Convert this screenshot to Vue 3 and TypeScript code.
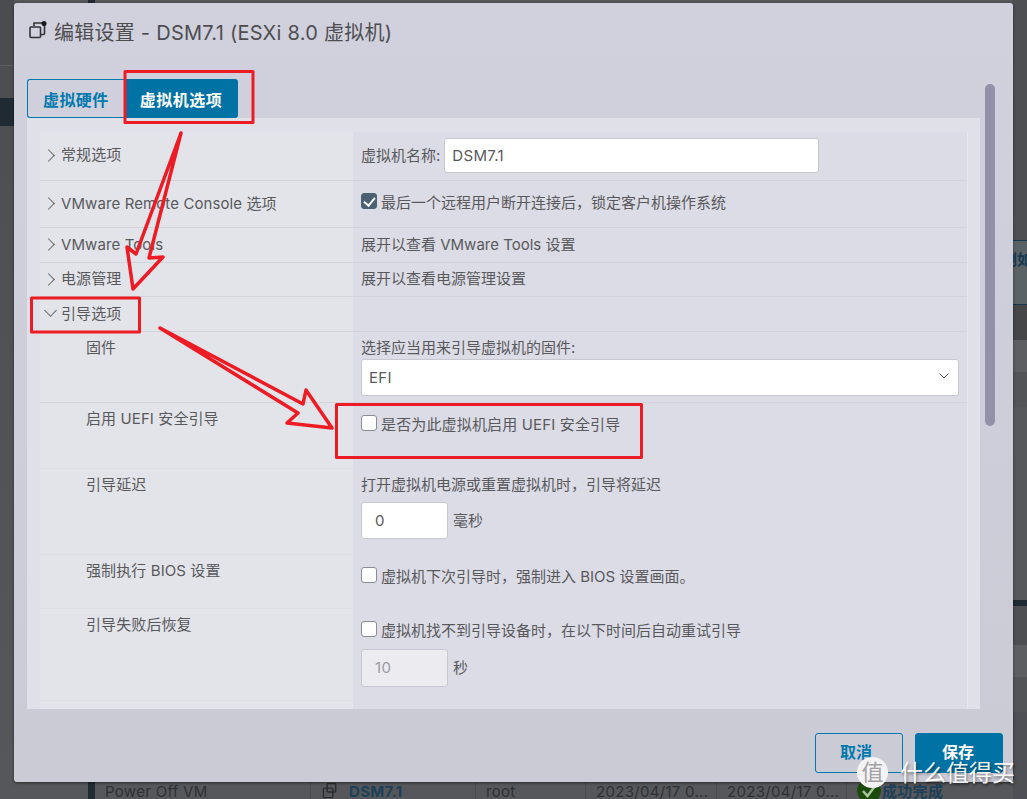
<template>
  <div class="page">
    <div class="side side-left">
      <div class="s-a"></div>
      <div class="s-b"></div>
      <div class="s-c"></div>
      <div class="s-d"></div>
    </div>
    <div class="top-strip"></div>
    <div class="side side-right">
      <div class="r-a"></div>
      <div class="r-btn"><span>例如</span></div>
      <div class="r-b"></div>
      <div class="r-c"></div>
      <div class="r-d"></div>
      <div class="r-e"></div>
      <div class="r-dark"></div>
      <div class="r-f"></div>
      <div class="r-c"></div>
      <div class="r-d"></div>
    </div>
    <div class="task-row">
      <div class="task-mark"></div>
      <div class="task-cell cell-name">Power Off VM</div>
      <div class="task-cell cell-vm">
        <svg class="vm-icon" viewBox="0 0 18 18" width="17" height="17">
          <rect x="5.5" y="1.5" width="9" height="9" rx="1" />
          <rect x="1.5" y="6.5" width="10" height="10" rx="1" />
        </svg>
        <b>DSM7.1</b>
      </div>
      <div class="task-cell cell-user">root</div>
      <div class="task-cell cell-date">2023/04/17 0...</div>
      <div class="task-cell cell-date second">2023/04/17 0...</div>
      <div class="task-cell cell-state">
        <svg viewBox="0 0 24 24" width="24" height="24">
          <circle cx="12" cy="12" r="12" fill="#1c4a0c" />
          <path d="M6 12l4.5 5L18 7" fill="none" stroke="#a9c6a0" stroke-width="2.4" />
        </svg>
        <b>成功完成</b>
      </div>
    </div>

    <section class="modal">
      <header class="modal-head">
        <svg class="title-icon" viewBox="0 0 18 18" width="18" height="18">
          <path d="M5 5V2h9.500c.6 0 1 .4 1 1v9.500c0 .6-.4 1-1 1H12" />
          <rect x="1" y="6" width="10.500" height="10.500" rx="1" />
          <circle class="dot" cx="15" cy="2.500" r="2.500" />
        </svg>
        <h1>编辑设置 - DSM7.1 (ESXi 8.0 虚拟机)</h1>
      </header>

      <nav class="tabs">
        <button class="tab">虚拟硬件</button>
        <button class="tab active">虚拟机选项</button>
      </nav>

      <div class="panel">
        <div class="table">
          <div class="row h1">
            <div class="lab center"><i class="chev"></i>常规选项</div>
            <div class="val center">
              <span>虚拟机名称:</span>
              <div class="input name-input">DSM7.1</div>
            </div>
          </div>
          <div class="row h2">
            <div class="lab center"><i class="chev"></i>VMware Remote Console 选项</div>
            <div class="val check-row">
              <label class="check"><i class="box on"></i>最后一个远程用户断开连接后，锁定客户机操作系统</label>
            </div>
          </div>
          <div class="row h3">
            <div class="lab center"><i class="chev"></i>VMware Tools</div>
            <div class="val center">展开以查看 VMware Tools 设置</div>
          </div>
          <div class="row h4">
            <div class="lab center"><i class="chev"></i>电源管理</div>
            <div class="val center">展开以查看电源管理设置</div>
          </div>
          <div class="row h5">
            <div class="lab center"><i class="chev open"></i>引导选项</div>
            <div class="val"></div>
          </div>
          <div class="row h6">
            <div class="lab sub">固件</div>
            <div class="val stack">
              <span>选择应当用来引导虚拟机的固件:</span>
              <div class="input select">
                EFI
                <svg viewBox="0 0 10 6" width="10" height="6"><path d="M.5.500 5 5 9.500.500" /></svg>
              </div>
            </div>
          </div>
          <div class="row h7">
            <div class="lab sub">启用 UEFI 安全引导</div>
            <div class="val check-row">
              <label class="check uefi"><i class="box"></i>是否为此虚拟机启用 UEFI 安全引导</label>
            </div>
          </div>
          <div class="row h8">
            <div class="lab sub">引导延迟</div>
            <div class="val stack">
              <span>打开虚拟机电源或重置虚拟机时，引导将延迟</span>
              <div class="num-line delay">
                <div class="input num">0</div>
                <span>毫秒</span>
              </div>
            </div>
          </div>
          <div class="row h9">
            <div class="lab sub">强制执行 BIOS 设置</div>
            <div class="val check-row">
              <label class="check"><i class="box"></i>虚拟机下次引导时，强制进入 BIOS 设置画面。</label>
            </div>
          </div>
          <div class="row h10">
            <div class="lab sub">引导失败后恢复</div>
            <div class="val check-row">
              <label class="check"><i class="box"></i>虚拟机找不到引导设备时，在以下时间后自动重试引导</label>
              <div class="num-line retry">
                <div class="input num off">10</div>
                <span>秒</span>
              </div>
            </div>
          </div>
          <div class="row h11">
            <div class="lab"></div>
            <div class="val"></div>
          </div>
        </div>
      </div>

      <footer class="modal-foot">
        <button class="btn">取消</button>
        <button class="btn primary">保存</button>
      </footer>

      <div class="thumb"></div>
    </section>

    <svg class="marks" viewBox="0 0 1027 799" width="1027" height="799">
      <rect x="125" y="71.500" width="128" height="51" />
      <rect x="31.500" y="298" width="108" height="34" />
      <rect x="336.500" y="404.500" width="305" height="53" />
      <path d="M181 133 136 254 127 247 133 289 163 257 149 258Z" />
      <path d="M160 328 303 404 306 390 332 428 287 423 298 413Z" />
    </svg>

    <div class="watermark">
      <span class="seal">值</span>
      <span class="brand">什么值得买</span>
    </div>
  </div>
</template>

<script setup lang="ts">
// static dialog, nothing to wire up
</script>

<style>
html,
body {
  margin: 0;
  background: #4f5055;
}
</style>

<style scoped>
.page {
  position: relative;
  width: 1027px;
  height: 799px;
  overflow: hidden;
  display: grid;
  grid-template-columns: 14px 1fr 14px;
  grid-template-rows: 782px 17px;
  background: #4f5055;
  font-family: Inter, "Noto Sans CJK SC", sans-serif;
  font-size: 15px;
  line-height: 20px;
  color: #59595c;
}

/* page behind the dialog */
.side-left {
  grid-row: 1 / 3;
  grid-column: 1;
  display: flex;
  flex-direction: column;
}
.s-a { height: 65px; background: #4b4c50; border-bottom: 1px solid #5f6064; }
.s-b { height: 32px; background: #4d4e52; }
.s-c { height: 28px; background: #1f2a33; }
.s-d { flex: 1; background: linear-gradient(#4e4f53, #56575a); }

.top-strip {
  grid-column: 2;
  grid-row: 1;
  height: 3px;
  background:
    linear-gradient(90deg, transparent 74px, #1f2a33 74px, #1f2a33 81px, transparent 81px),
    #56575a;
}

.side-right {
  grid-row: 1 / 3;
  grid-column: 3;
  display: flex;
  flex-direction: column;
}
.r-a { height: 240px; background: #4e4f53; }
.r-btn {
  height: 65px;
  box-sizing: border-box;
  background: #5a6265;
  border-top: 1px solid #17394f;
  border-bottom: 1px solid #17394f;
  color: #163a52;
  font-weight: 700;
  line-height: 38px;
  overflow: hidden;
  white-space: nowrap;
}
.r-btn span { display: block; margin-left: -11px; }
.r-b { height: 35px; background: #464649; }
.r-c { height: 32px; background: #5d5e61; }
.r-d { height: 35px; background: #535458; }
.r-e { height: 193px; background: #57585b; }
.r-dark { height: 6px; background: #1d2a33; }
.r-f { height: 39px; background: #4e4f53; }

/* table row peeking out below */
.task-row {
  grid-column: 2;
  grid-row: 2;
  display: flex;
  height: 17px;
  padding-left: 74px;
  background: #56575a;
  color: #2f3034;
  font-size: 15px;
  line-height: 19px;
  letter-spacing: .3px;
  white-space: nowrap;
  overflow: hidden;
}
.task-mark { width: 7px; background: #1f2a33; }
.task-cell {
  box-sizing: border-box;
  padding-left: 10px;
  border-left: 1px solid #4a4b4e;
  display: flex;
  gap: 10px;
}
.cell-name { width: 215px; border-left: 0; }
.cell-vm { width: 165px; padding-left: 11px; }
.cell-vm b, .cell-state b { color: #1d4058; font-weight: 700; }
.cell-user { width: 110px; }
.cell-date { width: 131px; }
.cell-date.second { width: 130px; }
.cell-state { flex: 1; gap: 1px; }
.cell-state svg { flex: none; margin-top: -3px; }
.vm-icon { fill: none; stroke: #2c2d30; stroke-width: 1.500; }

/* dialog */
.modal {
  position: absolute;
  left: 14px;
  top: 3px;
  width: 999px;
  height: 779px;
  display: flex;
  flex-direction: column;
  border-radius: 3px;
  background: linear-gradient(#d1d1de, #cbcbd6);
  box-shadow: 0 1px 3px rgba(0, 0, 0, .5);
}
.modal-head {
  height: 76px;
  box-sizing: border-box;
  padding: 16px 0 0 15px;
  display: flex;
  align-items: flex-start;
  gap: 8px;
}
.title-icon { margin-top: 2px; fill: none; stroke: #333336; stroke-width: 1.600; }
.title-icon .dot { fill: #1a1a1c; stroke: none; }
h1 {
  margin: 1px 0 0 -1px;
  font-size: 20px;
  line-height: 26px;
  font-weight: 400;
  letter-spacing: .25px;
  color: #4d4d50;
}
.tabs {
  height: 39px;
  display: flex;
  padding-left: 13px;
}
.tab {
  width: 104px;
  padding: 0 0 0 15px;
  text-align: left;
  border: 1px solid #0079ad;
  border-right: 0;
  border-radius: 3px 0 0 3px;
  background: transparent;
  color: #0079ad;
  font: 700 16px Inter, "Noto Sans CJK SC", sans-serif;
  letter-spacing: .4px;
}
.tab.active {
  width: 114px;
  margin-left: -7px;
  text-align: center;
  padding: 0;
  border: 0;
  border-radius: 3px;
  background: #0072a3;
  color: #fff;
  letter-spacing: .5px;
}
.panel {
  width: 953px;
  height: 591px;
  margin-left: 13px;
  box-sizing: border-box;
  padding: 14px 13px 0;
  background: #e0e0e9;
  overflow: hidden;
}
.table {
  width: 927px;
  border-right: 1px solid #e7e7ef;
}
.row {
  display: grid;
  grid-template-columns: 313px 614px;
  box-sizing: border-box;
  border-bottom: 1px solid #d2d3db;
}
.h1 { height: 49px; }
.h2 { height: 47px; }
.h3 { height: 35px; }
.h4 { height: 34px; }
.h5 { height: 35px; }
.h6 { height: 71px; }
.h7 { height: 66px; }
.h8 { height: 86px; }
.h9 { height: 54px; }
.h10 { height: 92px; }
.h11 { height: 20px; border-bottom: 0; }
.h7, .h8, .h9, .h10 { border-bottom-color: #dcdde5; }

.lab { background: #e3e4ea; }
.val { background: #dcdce6; padding-left: 8px; }
.center { display: flex; align-items: center; }
.lab.center { padding-left: 21px; position: relative; letter-spacing: .1px; }
.h1 .lab.center, .h4 .lab.center, .h4 .val.center { padding-bottom: 2px; }
.lab.sub { padding: 6px 0 0 46px; letter-spacing: .1px; }

.chev {
  position: absolute;
  left: 4px;
  top: 50%;
  width: 9px;
  height: 9px;
  margin-top: -5px;
  box-sizing: border-box;
  border-top: 1.300px solid #666;
  border-right: 1.300px solid #666;
  transform: rotate(45deg);
}
.chev.open {
  left: 6px;
  margin-top: -8px;
  transform: rotate(135deg);
}

.input {
  box-sizing: border-box;
  background: #fff;
  border: 1px solid #c8c8d0;
  border-radius: 3px;
  padding-left: 7px;
  letter-spacing: .3px;
}
.name-input {
  width: 375px;
  height: 35px;
  line-height: 33px;
  margin-left: 4px;
  margin-top: -1px;
}
.stack { padding-top: 6px; display: flex; flex-direction: column; align-items: flex-start; }
.select {
  width: 598px;
  height: 37px;
  line-height: 35px;
  margin-top: 1px;
  display: flex;
  justify-content: space-between;
  align-items: center;
  padding-right: 9px;
}
.select svg { fill: none; stroke: #555; margin-top: -3px; }

.check-row { padding-top: 12px; }
.check { display: flex; gap: 4px; }
.check.uefi { letter-spacing: .15px; }
.box {
  flex: none;
  width: 16px;
  height: 16px;
  box-sizing: border-box;
  background: #fff;
  border: 1px solid #8b8b93;
  border-radius: 3px;
}
.box.on {
  position: relative;
  background: #4a6173;
  border-color: #4a6173;
}
.box.on::after {
  content: "";
  position: absolute;
  left: 4px;
  top: 1px;
  width: 5px;
  height: 9px;
  border-right: 2px solid #fff;
  border-bottom: 2px solid #fff;
  transform: rotate(40deg);
}
.num-line { display: flex; align-items: center; gap: 5px; }
.num {
  width: 87px;
  height: 37px;
  line-height: 35px;
  padding-left: 13px;
}
.num.off { height: 38px; background: #ebebf0; color: #9c9ca2; }
.delay { margin-top: 7px; }
.retry { margin-top: 8px; }

.modal-foot {
  display: flex;
  justify-content: flex-end;
  gap: 12px;
  padding: 24px 10px 0 0;
}
.btn {
  width: 88px;
  height: 40px;
  padding: 0 6px 4px 0;
  border: 1px solid #0079ad;
  border-radius: 3px;
  background: transparent;
  color: #0079ad;
  font: 700 16px Inter, "Noto Sans CJK SC", sans-serif;
}
.btn.primary {
  padding-right: 2px;
  background: #0072a3;
  border-color: #0072a3;
  color: #fff;
}
.thumb {
  position: absolute;
  left: 971px;
  top: 81px;
  width: 10px;
  height: 342px;
  border-radius: 5px;
  background: #9291a9;
}

/* red annotations drawn on top of the shot */
.marks {
  position: absolute;
  left: 0;
  top: 0;
  fill: none;
  stroke: #ed1c24;
  stroke-width: 3;
  stroke-linejoin: round;
}
.marks path { stroke-width: 3.500; }

.watermark {
  position: absolute;
  left: 857px;
  top: 756px;
  display: flex;
  align-items: center;
  gap: 12px;
  color: #fff;
}
.seal {
  width: 31px;
  height: 31px;
  border-radius: 50%;
  background: #f4f4f4;
  color: #a2a2a6;
  font-size: 22px;
  line-height: 30px;
  text-align: center;
}
.brand {
  margin-top: 2px;
  font-size: 23px;
  line-height: 30px;
  white-space: nowrap;
  text-shadow: 1px 2px 3px rgba(0, 0, 0, .5);
  opacity: .92;
}
</style>
